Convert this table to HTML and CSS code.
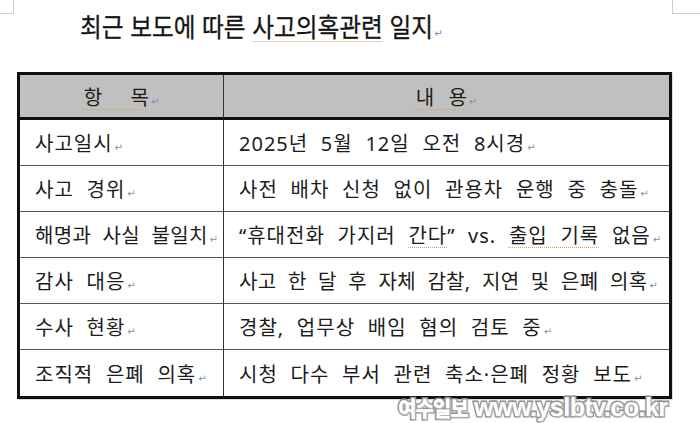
FILE: index.html
```html
<!DOCTYPE html>
<html lang="ko">
<head>
<meta charset="utf-8">
<title>최근 보도에 따른 사고의혹관련 일지</title>
<link rel="stylesheet" href="styles.css">
</head>
<body>
<div class="page">
  <span class="corner corner-left"></span>
  <span class="corner corner-right"></span>
  <h1 class="title"><span class="title-text">최근 보도에 따른 <span class="spell">사고의혹관련</span> 일지<span class="ret">↵</span></span></h1>
  <div class="table">
    <div class="cell head col1"><span class="txt"><span class="spell">항  목</span><span class="ret">↵</span></span></div>
    <div class="cell head col2"><span class="txt"><span class="spell">내 용</span><span class="ret">↵</span></span></div>

    <div class="cell col1"><span class="txt">사고일시<span class="ret">↵</span></span></div>
    <div class="cell col2"><span class="txt">2025년 5월 12일 오전 8시경<span class="ret">↵</span></span></div>

    <div class="cell col1"><span class="txt">사고 경위<span class="ret">↵</span></span></div>
    <div class="cell col2"><span class="txt">사전 배차 신청 없이 관용차 운행 중 충돌<span class="ret">↵</span></span></div>

    <div class="cell col1"><span class="txt tight">해명과 사실 불일치<span class="ret">↵</span></span></div>
    <div class="cell col2"><span class="txt">“휴대전화 가지러 <span class="spell">간다</span>” vs. <span class="spell">출입 기록</span> 없음<span class="ret">↵</span></span></div>

    <div class="cell col1"><span class="txt">감사 대응<span class="ret">↵</span></span></div>
    <div class="cell col2"><span class="txt tight">사고 한 달 후 자체 감찰, 지연 및 은폐 의혹<span class="ret">↵</span></span></div>

    <div class="cell col1"><span class="txt">수사 현황<span class="ret">↵</span></span></div>
    <div class="cell col2"><span class="txt">경찰, 업무상 배임 혐의 검토 중<span class="ret">↵</span></span></div>

    <div class="cell col1 last"><span class="txt">조직적 은폐 의혹<span class="ret">↵</span></span></div>
    <div class="cell col2 last"><span class="txt">시청 다수 부서 관련 축소·은폐 정황 보도<span class="ret">↵</span></span></div>
  </div>
  <div class="watermark"><span class="wm-ko">여수일보</span> www.yslbtv.co.kr</div>
</div>
</body>
</html>
```
FILE: styles.css
```css
html, body {
  margin: 0;
  padding: 0;
  background: #ffffff;
}

.page {
  position: relative;
  width: 700px;
  height: 423px;
  overflow: hidden;
  font-family: "Noto Sans", "Noto Sans CJK KR", sans-serif;
  color: #1c1c1c;
}

.corner {
  position: absolute;
  top: 0;
  height: 13px;
  border-bottom: 1px solid #cfcfcf;
}

.corner-left {
  left: 0;
  width: 13px;
  border-right: 1px solid #cfcfcf;
}

.corner-right {
  left: 672px;
  width: 28px;
  border-left: 1px solid #cfcfcf;
}

.title {
  margin: 10px 0 0 0;
  padding-left: 80px;
  height: 32px;
  font-family: "Noto Sans CJK KR", sans-serif;
  font-size: 26px;
  font-weight: 400;
  line-height: 32px;
  color: #151515;
  white-space: nowrap;
}

.title-text {
  display: inline-block;
  transform: scaleX(0.91);
  transform-origin: left center;
  -webkit-text-stroke: 0.3px #151515;
}

.spell {
  text-decoration: underline dotted #d9a060;
  text-decoration-thickness: 1px;
  text-underline-offset: 4px;
}

.ret {
  font-family: "DejaVu Sans", sans-serif;
  font-size: 10px;
  color: #7c8fc0;
  margin-left: 2px;
  letter-spacing: 0;
  word-spacing: 0;
  -webkit-text-stroke: 0;
}

.title .ret {
  font-size: 11px;
}

.table {
  margin: 30px 0 0 17px;
  width: 655px;
  box-sizing: border-box;
  border: 3px solid #111;
  display: grid;
  grid-template-columns: 204px 1fr;
  box-shadow: 1px 1px 0 #dcdcdc;
}

.cell {
  display: flex;
  align-items: center;
  height: 46px;
  box-sizing: border-box;
  padding-left: 15px;
  font-size: 20px;
  letter-spacing: 1px;
  word-spacing: 6.5px;
  white-space: nowrap;
  border-bottom: 1px solid #555;
}

.txt.tight {
  letter-spacing: 0.3px;
  word-spacing: 6px;
}

.col1 {
  border-right: 1px solid #333;
}

.cell.last {
  border-bottom: none;
  height: 46px;
}

.head {
  height: 45px;
  background: #c0c0c0;
  justify-content: center;
  padding-left: 0;
  white-space: pre;
  letter-spacing: 0;
  word-spacing: 9px;
  border-bottom: 3px solid #111;
}

.watermark {
  position: absolute;
  left: 398px;
  top: 394px;
  font-family: "Liberation Sans", "Noto Sans CJK KR", sans-serif;
  font-weight: 700;
  font-size: 25px;
  line-height: 24px;
  letter-spacing: -0.5px;
  color: #ffffff;
  transform: scaleY(1.05);
  transform-origin: left top;
  -webkit-text-stroke: 3px #8e8e8e;
  paint-order: stroke fill;
  text-shadow: 1px 1px 2px #c4c4c4;
  white-space: nowrap;
}

.wm-ko {
  font-family: "Noto Sans CJK KR", sans-serif;
  font-weight: 900;
  font-size: 20px;
  letter-spacing: -1px;
}
```
